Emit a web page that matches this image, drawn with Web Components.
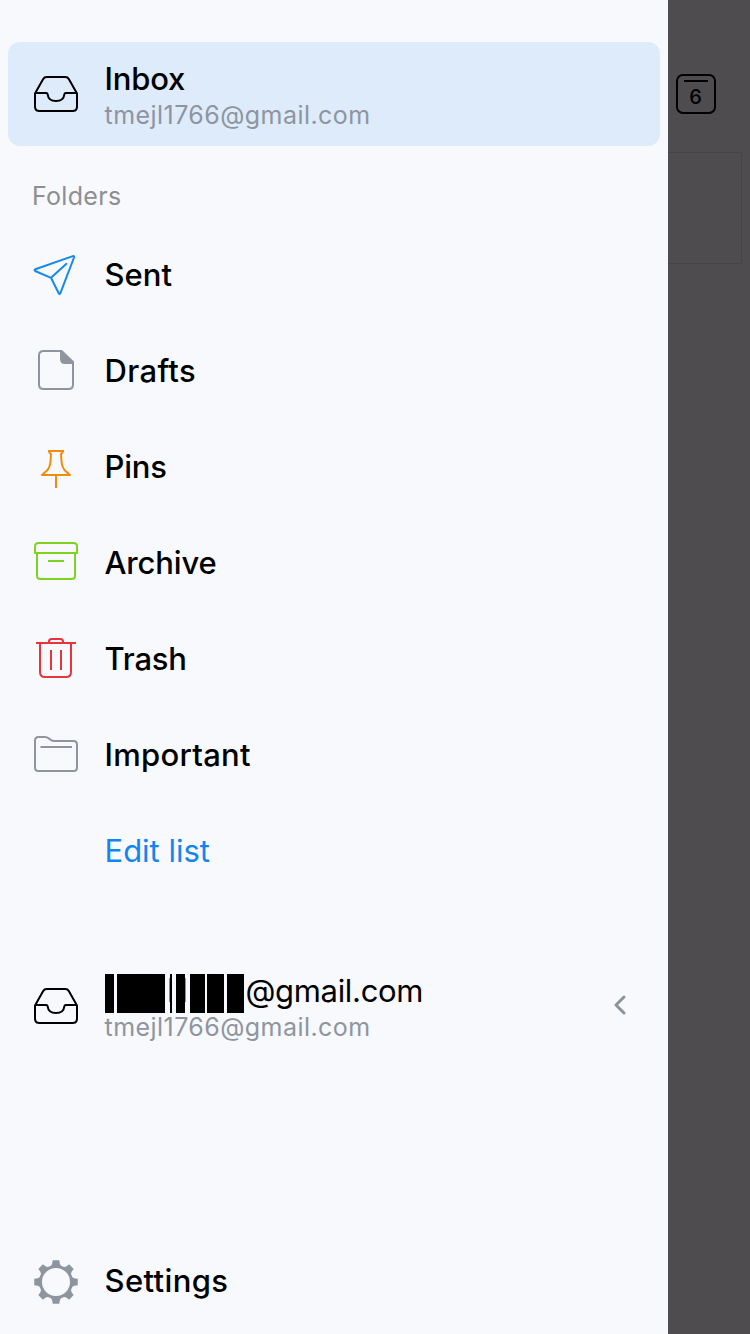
<!DOCTYPE html>
<html lang="en">
<head>
<meta charset="utf-8">
<title>Mail</title>
<style>
html,body{margin:0;height:100%;overflow:hidden}
body{font-family:Inter,"Liberation Sans",sans-serif;color:#000;background:#4e4c4f}
</style>
</head>
<body>
<mail-app></mail-app>
<script>
function gear(){
  const cx=24,cy=25,p=[];
  for(let i=0;i<8;i++){
    for(const [r,d] of [[17,-18.5],[17.3,-15.5],[18.6,-12],[22,-8.5],[22,8.5],[18.6,12],[17.3,15.5],[17,18.5]]){
      const a=(i*45+d)*Math.PI/180;
      p.push((cx+r*Math.sin(a)).toFixed(2)+' '+(cy-r*Math.cos(a)).toFixed(2));
    }
  }
  return `<path fill="currentColor" stroke="none" fill-rule="evenodd" d="M${p.join('L')}ZM10 25a14 14 0 1 0 28 0a14 14 0 1 0-28 0Z"/>`;
}
const ICONS={
  inbox:'<path d="M3 23.5 11.2 9Q12.4 7 14.5 7H33.500Q35.600 7 36.800 9L45 23.500V36.500Q45 41 40.500 41H7.500Q3 41 3 36.500ZM3 23H14Q15.500 23 15.700 24.500C16.200 29.500 19 31 24 31S31.800 29.500 32.300 24.500Q32.500 23 34 23H45"/>',
  sent:'<path d="M3.300 18.300 40.800 5.100Q42.500 4.700 42 6.500L28.300 42.300Q27.500 43.700 26.700 42.300L19 26.800 3.200 20Q1.900 19.100 3.300 18.300ZM19 26.800 35 12.300"/>',
  drafts:'<path d="M29 4H11.500Q7 4 7 8.500V37.500Q7 42 11.500 42H36.500Q41 42 41 37.500V16"/><path fill="currentColor" stroke="none" d="M28 3H30L42 14.500V17H33Q28 17 28 12Z"/>',
  pin:'<path d="M16 8H32M17 8Q17 10 19 11L18.500 18.500Q18 24.500 14.500 28L10 32H38L33.500 28Q30 24.500 29.500 18.500L29 11Q31 10 31 8M24 32V45"/>',
  archive:'<path d="M3 14V7.500Q3 4 6.500 4H41.500Q45 4 45 7.500V14ZM5 14V36.500Q5 40 8.500 40H39.500Q43 40 43 36.500V14M16 22H32"/>',
  trash:'<path d="M4 8H44M8 8V37Q8 42 13 42H34Q39 42 39 37V8M17 8V6.500Q17 4 19.500 4H28.500Q31 4 31 6.500V8M19 15V35M29 15V35"/>',
  folder:'<path d="M3 9.500Q3 6 6.500 6H13Q15 6 16.800 7.400L18.500 8.700Q20.200 10 22.500 10H41.500Q45 10 45 13.500V36.500Q45 40 41.500 40H6.500Q3 40 3 36.500ZM8.500 16H40"/>',
  gear:gear(),
  none:''
};
function define(name,render){
  customElements.define(name,class extends HTMLElement{
    constructor(){super();this.attachShadow({mode:'open'});}
    connectedCallback(){this.shadowRoot.innerHTML=render(this);}
  });
}
define('line-icon',el=>`<style>:host{display:block;width:48px;height:48px;flex:none}svg{display:block}</style>
<svg width="48" height="48" viewBox="0 0 48 48" fill="none" stroke="currentColor" stroke-width="2" stroke-linejoin="round">${ICONS[el.getAttribute('name')]}</svg>`);

define('folder-item',el=>`<style>
:host{display:flex;align-items:center;height:96px;padding-left:32px;gap:24.500px;font-size:31px;font-weight:500;line-height:40px;letter-spacing:var(--track,0)}
line-icon{color:var(--tint)}
</style><line-icon name="${el.getAttribute('icon')}"></line-icon><span><slot></slot></span>`);

define('account-item',el=>`<style>
:host{display:flex;align-items:center;box-sizing:border-box;height:104px;margin:0 8px;padding:0 28px 0 24px;gap:24.500px;border-radius:12px}
:host([selected]){background:#deebfb}
.text{flex:1;display:flex;flex-direction:column;padding-top:1px}
.name{display:flex;align-items:center;height:39px;font-size:31px;font-weight:500;letter-spacing:var(--track,0)}
:host(:not([selected])) .name{font-weight:400}
.mail{height:32px;line-height:34px;font-size:25px;letter-spacing:.45px;color:#8e959f}
</style><line-icon name="inbox"></line-icon>
<div class="text"><div class="name"><slot></slot></div><div class="mail"><slot name="mail"></slot></div></div><slot name="end"></slot>`);

define('masked-name',()=>`<style>:host{display:block;height:39px;padding-top:6px;margin-right:2px}svg{display:block}</style>
<svg width="139" height="39" shape-rendering="crispEdges"><path d="M0 0h9v39H0zM12 0h48v39H12zM65 0h2v39h-2zM71 0h9v39h-9zM85 0h15v39H85zM102 0h17v39h-17zM122 0h17v39h-17z"/><path fill="#8c8d90" d="M64 4h1v24h-1zM80 4h1v24h-1z"/></svg>`);

define('chevron-left',()=>`<style>:host{display:block}svg{display:block}</style>
<svg width="24" height="24" viewBox="0 0 24 24" fill="none" stroke="#8c929b" stroke-width="3" stroke-linecap="round" stroke-linejoin="round"><path d="M16 3 8 11 16 19"/></svg>`);

define('section-title',()=>`<style>:host{display:block;box-sizing:border-box;height:81px;padding:34px 0 0 32px;font-size:25px;line-height:32px;letter-spacing:.3px;color:#8e8e93}</style><slot></slot>`);

define('calendar-day',()=>`<style>
:host{display:block;box-sizing:border-box;width:40px;height:40px;border:2px solid #000;border-radius:7px;padding-top:4px;text-align:center;font-size:20px;font-weight:500;line-height:26px}
i{display:block;width:24px;height:2px;margin:0 auto}i{background:#000}span{display:block;margin-top:2px;margin-left:-1px}
</style><i></i><span><slot></slot></span>`);

define('dimmed-page',()=>`<style>
:host{display:flex;flex-direction:column;background:#4e4c4f;padding:74px 8px 0 0}
calendar-day{margin-left:8px}
.card{box-sizing:border-box;height:112px;margin-top:38px;border:1px solid #464447;border-left:0}
</style><calendar-day>6</calendar-day><div class="card"></div>`);

define('mail-drawer',()=>`<style>
:host{display:flex;flex-direction:column;box-sizing:border-box;padding:42px 0 5px;background:#f7f9fd}
.other{margin-top:55px}.foot{margin-top:auto}
</style>
<account-item selected style="--track:-.2px">Inbox<span slot="mail">tmejl1766@gmail.com</span></account-item>
<section-title>Folders</section-title>
<folder-item icon="sent" style="--tint:#1788ee">Sent</folder-item>
<folder-item icon="drafts" style="--tint:#8e959f;--track:.35px">Drafts</folder-item>
<folder-item icon="pin" style="--tint:#f08c0a;--track:-.2px">Pins</folder-item>
<folder-item icon="archive" style="--tint:#7ed321;--track:-.15px">Archive</folder-item>
<folder-item icon="trash" style="--tint:#e8353b;--track:-.2px">Trash</folder-item>
<folder-item icon="folder" style="--tint:#8e959f;--track:.27px">Important</folder-item>
<folder-item icon="none" style="color:#1485f0;font-weight:400">Edit list</folder-item>
<account-item class="other" style="--track:-.33px"><masked-name></masked-name>@gmail.com<span slot="mail">tmejl1766@gmail.com</span><chevron-left slot="end"></chevron-left></account-item>
<folder-item class="foot" icon="gear" style="--tint:#8e959f;--track:.38px">Settings</folder-item>`);

define('mail-app',()=>`<style>:host{display:grid;grid-template-columns:668px 1fr;height:100vh}</style><mail-drawer></mail-drawer><dimmed-page></dimmed-page>`);
</script>
</body>
</html>
